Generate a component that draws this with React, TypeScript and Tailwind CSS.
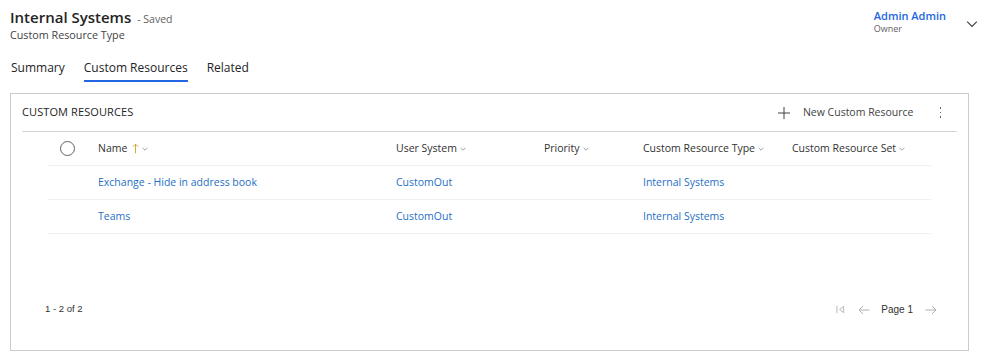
import React from 'react';

const font = { fontFamily: '"Segoe UI", "Open Sans", "Noto Sans", sans-serif' };

const Chevron: React.FC<{ className?: string }> = ({ className }) => (
    <svg viewBox="0 0 10 6" className={className} fill="none" stroke="currentColor" strokeWidth="1">
        <path d="M1 1l4 4 4-4" />
    </svg>
);

const columns = [
    { label: 'User System', w: 'w-[148px]' },
    { label: 'Priority', w: 'w-[99px]' },
    { label: 'Custom Resource Type', w: 'w-[149px]' },
    { label: 'Custom Resource Set', w: 'w-[139px]' },
];

const rows = [
    { name: 'Exchange - Hide in address book', system: 'CustomOut', type: 'Internal Systems' },
    { name: 'Teams', system: 'CustomOut', type: 'Internal Systems' },
];

export default function App() {
    return (
        <div className="w-[990px] h-[361px] bg-white text-[#242424] overflow-hidden" style={font}>
            {/* record header */}
            <div className="flex justify-between pl-[10px] pr-[12px] pt-[6px]">
                <div>
                    <div className="flex items-baseline gap-[6px]">
                        <span className="text-[15px] font-semibold leading-[22px]">Internal Systems</span>
                        <span className="text-[10.5px] text-[#616161]">- Saved</span>
                    </div>
                    <div className="text-[10.75px] leading-[14px] text-[#424242]">Custom Resource Type</div>
                </div>
                <div className="flex items-start pt-[2px]">
                    <div className="mr-[20px]">
                        <div className="text-[11px] font-semibold leading-[15px] text-[#2266e3]">Admin Admin</div>
                        <div className="text-[9px] leading-[12px] text-[#616161]">Owner</div>
                    </div>
                    <Chevron className="w-[12px] h-[8px] mt-[12px] text-[#424242]" />
                </div>
            </div>

            {/* tabs */}
            <div className="flex gap-[19px] pl-[11px] mt-[17px] text-[12px]">
                <div className="pb-[3px] border-b-2 border-transparent">Summary</div>
                <div className="pb-[3px] border-b-2 border-[#2266e3]">Custom Resources</div>
                <div className="pb-[3px] border-b-2 border-transparent">Related</div>
            </div>

            {/* panel */}
            <div className="mx-[10px] mt-[11px] w-[959px] h-[258px] border border-[#cccccc] flex flex-col px-[11px]">
                <div className="flex items-center h-[38px] border-b border-[#d6d6d6]">
                    <span className="text-[11px] tracking-[0.1px] text-[#242424]">CUSTOM RESOURCES</span>
                    <div className="ml-auto flex items-center text-[10.5px] text-[#424242]">
                        <svg viewBox="0 0 12 12" className="w-[12px] h-[12px] mr-[13px]" stroke="currentColor" strokeWidth="1">
                            <path d="M6 0v12M0 6h12" />
                        </svg>
                        <span>New Custom Resource</span>
                        <span className="ml-[26px] mr-[16px] flex flex-col gap-[3px]">
                            <span className="w-[1.5px] h-[1.5px] bg-[#616161]" />
                            <span className="w-[1.5px] h-[1.5px] bg-[#616161]" />
                            <span className="w-[1.5px] h-[1.5px] bg-[#616161]" />
                        </span>
                    </div>
                </div>

                <div className="ml-[26px] mr-[26px] text-[10.5px]">
                    <div className="flex items-center h-[34px] border-b border-[#f0f0f0] font-medium text-[#323130]">
                        <div className="w-[50px] flex pl-[12px]">
                            <span className="w-[15px] h-[15px] rounded-full border border-[#616161]" />
                        </div>
                        <div className="w-[298px] flex items-center">
                            <span>Name</span>
                            <svg viewBox="0 0 8 12" className="w-[7px] h-[11px] ml-[5px] text-[#c8a12a]" fill="none" stroke="currentColor" strokeWidth="1">
                                <path d="M4 11.5V1M1 4l3-3 3 3" />
                            </svg>
                            <Chevron className="w-[6px] h-[4px] ml-[3px] text-[#616161]" />
                        </div>
                        {columns.map(c => (
                            <div key={c.label} className={`${c.w} flex items-center`}>
                                <span>{c.label}</span>
                                <Chevron className="w-[6px] h-[4px] ml-[3px] text-[#616161]" />
                            </div>
                        ))}
                    </div>
                    {rows.map(r => (
                        <div key={r.name} className="flex items-center h-[34px] border-b border-[#f0f0f0] text-[#1f6fc4]">
                            <div className="w-[50px]" />
                            <div className="w-[298px]">{r.name}</div>
                            <div className="w-[148px]">{r.system}</div>
                            <div className="w-[99px]" />
                            <div className="w-[149px]">{r.type}</div>
                            <div className="w-[139px]" />
                        </div>
                    ))}
                </div>

                <div className="mt-auto mb-[33px] flex items-center pl-[23px] pr-[20px] text-[9.5px] text-[#323130]" style={{ fontFamily: '"Liberation Sans", Arial, sans-serif' }}>
                    <span>1 - 2 of 2</span>
                    <div className="ml-auto flex items-center text-[#b0b0b0]">
                        <svg viewBox="0 0 10 10" className="w-[9px] h-[9px]" fill="none" stroke="currentColor" strokeWidth="1">
                            <path d="M1 1v8M8.5 1.5L4 5l4.5 3.5z" />
                        </svg>
                        <svg viewBox="0 0 12 10" className="w-[12px] h-[10px] ml-[13px]" fill="none" stroke="currentColor" strokeWidth="1">
                            <path d="M11.5 5H1M5 1L1 5l4 4" />
                        </svg>
                        <span className="ml-[11px] text-[#323130] text-[10px]">Page 1</span>
                        <svg viewBox="0 0 12 10" className="w-[12px] h-[10px] ml-[12px]" fill="none" stroke="currentColor" strokeWidth="1">
                            <path d="M0.5 5H11M7 1l4 4-4 4" />
                        </svg>
                    </div>
                </div>
            </div>
        </div>
    );
}
